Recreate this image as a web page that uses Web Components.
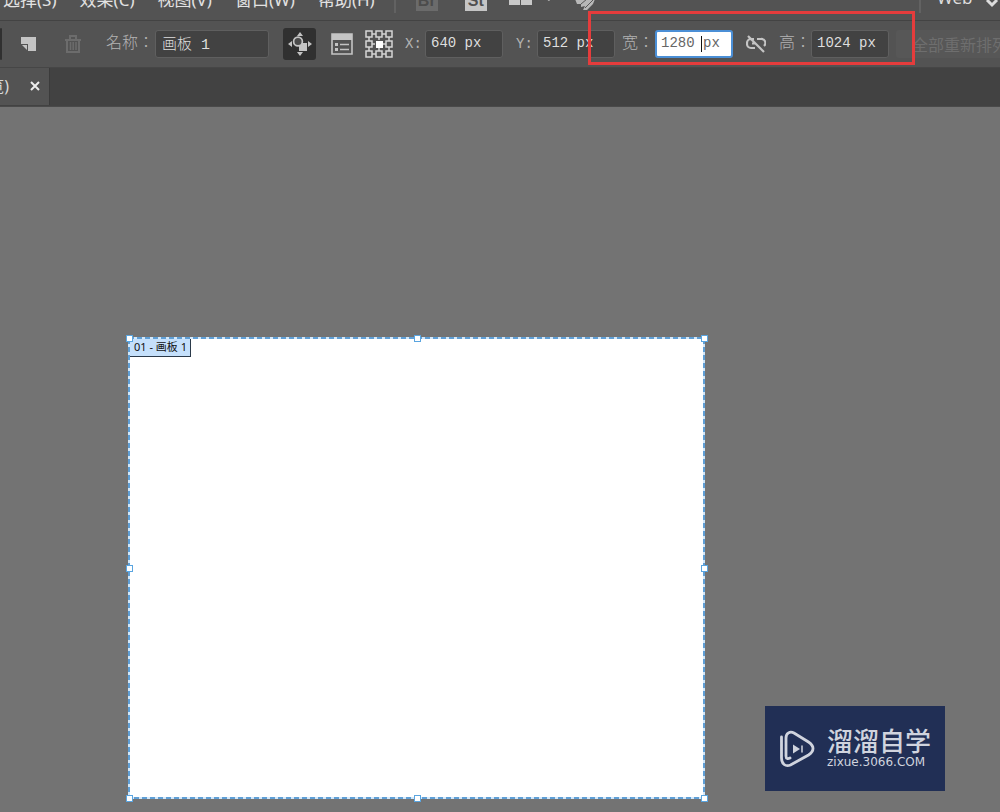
<!DOCTYPE html>
<html lang="zh-CN">
<head>
<meta charset="utf-8">
<title>画板</title>
<style>
html,body{margin:0;height:100%;overflow:hidden;background:#737373}
body{font-family:"Noto Sans","Noto Sans CJK SC",sans-serif}
</style>
</head>
<body>
<art-app></art-app>
<script>
function define(name, markup){
  const template=document.createElement('template');
  template.innerHTML=markup;
  customElements.define(name,class extends HTMLElement{
    connectedCallback(){
      if(this.shadowRoot) return;
      const root=this.attachShadow({mode:'open'});
      root.append(template.content.cloneNode(true));
      for(const el of root.querySelectorAll('[data-bind]')){
        const [target,source]=el.dataset.bind.split(':');
        const value=this.getAttribute(source)||'';
        if(target==='text') el.textContent=value; else el.setAttribute(target,value);
      }
    }
  });
}

define('menu-item',`
<style>
:host{display:block;flex:none}
button{all:unset;display:block;font-size:17px;line-height:22px;color:#e2e2e2;white-space:nowrap}
</style>
<button type="button"><slot></slot></button>`);

define('icon-button',`
<style>
:host{display:block;flex:none}
button{all:unset;display:flex;align-items:center;justify-content:center;box-sizing:border-box;width:100%;height:32px;border-radius:3px;color:#c4c4c4}
:host([active]) button{background:#303030}
:host([dim]) button{color:#6c6c6c}
</style>
<button type="button" data-bind="aria-label:label"><slot></slot></button>`);

define('option-field',`
<style>
:host{display:flex;align-items:center;flex:none;position:relative}
label{flex:none;font:300 16px/24px "Liberation Mono","Noto Sans CJK TC",monospace;color:#b4b4b4;width:var(--label-width,20px);white-space:nowrap}
:host([axis]) label{font-size:14px}
input{box-sizing:border-box;width:var(--field-width,78px);height:28px;margin:0;padding:0 5px 2px;border:1px solid #5f5f5f;border-radius:3px;background:#424242;color:#dedede;outline:0;font:300 14px/24px "Liberation Mono","Noto Sans CJK SC",monospace}
:host([wide]) input{font-size:15px;padding-left:6px}
:host([editing]) input{background:#fff;color:#666;border:2px solid #4b8fd6;padding:0 4px 2px}
.caret{display:none;position:absolute;right:31px;top:6px;width:1px;height:16px;background:#111}
:host([editing]) .caret{display:block}
</style>
<label for="field" lang="zh-TW" data-bind="text:label"></label>
<input id="field" type="text" data-bind="value:value"><span class="caret"></span>`);

define('app-menu',`
<style>
:host{display:flex;align-items:flex-end;box-sizing:border-box;height:21px;background:#535353;border-bottom:1px solid #434343;overflow:hidden}
nav{display:flex;gap:23px;flex:none;margin-left:3px;padding-bottom:9px}
.rule{flex:none;width:2px;height:13px;background:#626262;margin:0 0 7px 19px}
.apps{display:flex;align-items:flex-end;flex:none;padding-left:20px;height:21px}
.badge{all:unset;box-sizing:border-box;width:22px;height:22px;margin-bottom:9px;background:#c5c5c5;color:#505050;font:bold 16px/24px "Liberation Sans",sans-serif;text-align:center}
.badge.off{background:#6b6b6b;color:#4c4c4c;margin-right:27px}
svg{display:block;flex:none}
.space{flex:1}
.workspace{display:flex;align-items:flex-end;flex:none;padding:0 1px 11px 0}
select{appearance:none;border:0;margin:0 0 0 16px;padding:0;background:transparent;color:#dedede;font:17px/22px "Noto Sans",sans-serif;width:48px}
</style>
<nav aria-label="菜单">
<menu-item>选择(S)</menu-item><menu-item>效果(C)</menu-item><menu-item>视图(V)</menu-item><menu-item>窗口(W)</menu-item><menu-item>帮助(H)</menu-item>
</nav>
<span class="rule"></span>
<div class="apps">
<button class="badge off" type="button">Br</button><button class="badge" type="button">St</button>
<svg width="112" height="21" viewBox="0 0 112 21"><path fill="#c8c8c8" d="M22 0h11v6H22zM34 0h11v6H34zM59 0h5l-2 2z"/><path fill="#b8b8b8" d="M88 0h20l-2 5-6 6-4 0 2-4-4 1 0-3-4 0z"/><path d="M94 5l6-5M98 9l8-8" stroke="#585858" stroke-width="1"/></svg>
</div>
<span class="space"></span>
<span class="rule"></span>
<div class="workspace"><select aria-label="工作区"><option>Web</option></select>
<svg width="14" height="14" viewBox="0 0 14 14"><path d="M2 5l5 5 5-5" fill="none" stroke="#ddd" stroke-width="3"/></svg></div>`);

define('options-bar',`
<style>
:host{display:flex;align-items:center;box-sizing:border-box;height:47px;background:#535353;border-bottom:1px solid #464646;overflow:hidden}
.edge{width:2px;margin-right:11px}
.page{width:32px;margin-right:12px}.trash{width:32px;margin-right:17px}
.name{--label-width:49px;--field-width:114px;margin-right:14px}
.move{width:33px;margin-right:10px}.panel{width:32px;margin-right:5px}.origin{width:32px;margin-right:10px}
.x{margin-right:13px}.y{--label-width:21px;margin-right:7px}
.w{--label-width:33px;margin-right:7px}.link{width:32px;margin-right:7px}
.h{--label-width:32px;margin-right:7px}
svg{display:block}
.arrange{all:unset;flex:none;box-sizing:border-box;height:28px;padding-left:16px;width:128px;border-radius:3px;background:#575757;color:#6e6e6e;font:16px/28px "Noto Sans CJK SC",sans-serif;white-space:nowrap}
</style>
<icon-button class="edge" active label="纵向"></icon-button>
<icon-button class="page" label="新建画板"><svg width="16" height="16"><path fill="currentColor" d="M0 1h15v14H7V8H0z"/><path fill="currentColor" d="M1 9h5v5z"/></svg></icon-button>
<icon-button class="trash" dim label="删除画板"><svg width="18" height="19" fill="none" stroke="currentColor"><path stroke-width="2" d="M1 5h16M3 5v12h12V5M6 4V1h6v3"/><path stroke-width="1.5" d="M6.5 7v8M9.2 7v8M12 7v8"/></svg></icon-button>
<option-field class="name" wide label="名称：" value="画板 1"></option-field>
<icon-button class="move" active label="移动/复制带画板的图稿"><svg width="24" height="24"><path fill="currentColor" d="M12 0l3 4H9zM12 24l3-4H9zM0 12l4-3v6zM24 12l-4-3v6z"/><path fill="currentColor" d="M11 11h8v8h-8z"/><circle cx="10" cy="9.500" r="4.4" fill="#4a4a4a" stroke="currentColor" stroke-width="1.7"/></svg></icon-button>
<icon-button class="panel" label="画板选项"><svg width="22" height="22"><path fill="none" stroke="currentColor" stroke-width="1.6" d="M1 1h20v20H1z"/><path fill="currentColor" d="M1 1h20v6H1zM4 10h3v3H4zM4 15h3v3H4z"/><path stroke="currentColor" stroke-width="1.5" d="M9 11.5h9M9 16.5h9"/></svg></icon-button>
<icon-button class="origin" label="参考点"><svg width="28" height="28" fill="none" stroke="#d5d5d5" stroke-width="1.5"><path d="M7 4h4m6 0h4M7 14h3m8 0h3M7 24h4m6 0h4M4 7v4m0 6v4M14 7v3m0 8v3M24 7v4m0 6v4"/><path d="M1 1h6v6H1zM11 1h6v6h-6zM21 1h6v6h-6zM1 11h6v6H1zM21 11h6v6h-6zM1 21h6v6H1zM11 21h6v6h-6zM21 21h6v6h-6z"/><path fill="#fff" stroke="none" d="M11 11h7v7h-7z"/></svg></icon-button>
<option-field class="x" axis label="X:" value="640 px"></option-field>
<option-field class="y" axis label="Y:" value="512 px"></option-field>
<option-field class="w" editing label="宽：" value="1280 px"></option-field>
<icon-button class="link" label="约束宽度和高度比例"><svg width="20" height="18" fill="none" stroke="currentColor" stroke-width="2.2"><path d="M8 4H5a4 4 0 0 0-4 4v1a4 4 0 0 0 4 4h4M11 4h4a4 4 0 0 1 3 7M6 8.5h3M2 1l16 16"/></svg></icon-button>
<option-field class="h" label="高：" value="1024 px"></option-field>
<button class="arrange" type="button" disabled>全部重新排列</button>`);

define('document-tabs',`
<style>
:host{display:flex;box-sizing:border-box;height:39px;background:#424242;border-bottom:1px solid #4a4a4a;overflow:hidden}
.tab{display:flex;align-items:center;justify-content:flex-end;box-sizing:border-box;width:50px;height:37px;padding:0 9px 2px 0;gap:21px;background:#535353;border-right:1px solid #3b3b3b;color:#d8d8d8;font-size:16px;line-height:20px;white-space:nowrap}
button{all:unset;display:block;flex:none}
svg{display:block}
</style>
<div class="tab"><span>览)</span><button type="button" aria-label="关闭"><svg width="10" height="10"><path d="M1 1l8 8M9 1L1 9" stroke="#eee" stroke-width="2"/></svg></button></div>`);

define('art-board',`
<style>
:host{display:block;box-sizing:border-box;background:#fff}
.tag{display:block;box-sizing:border-box;width:fit-content;height:19px;padding:0 3px 0 4px;border:1px solid #2b3a4a;background:#c5e0fb;color:#111;font:11px/16px "Noto Sans","Noto Sans CJK SC",sans-serif;white-space:nowrap}
.frame{position:absolute;inset:0;width:100%;height:100%;overflow:visible}
rect{fill:none}
.handle{position:absolute;box-sizing:border-box;width:7px;height:7px;margin:-3px;background:#fff;border:1px solid #5aa5e0}
</style>
<span class="tag"><slot></slot></span>
<svg class="frame"><rect width="100%" height="100%" stroke="#d3e8fa" stroke-width="2"/><rect width="100%" height="100%" stroke="#5f9fd6" stroke-width="2" stroke-dasharray="5 3"/></svg>
<i class="handle" style="left:0;top:0"></i><i class="handle" style="left:50%;top:0"></i><i class="handle" style="left:100%;top:0"></i>
<i class="handle" style="left:0;top:50%"></i><i class="handle" style="left:100%;top:50%"></i>
<i class="handle" style="left:0;top:100%"></i><i class="handle" style="left:50%;top:100%"></i><i class="handle" style="left:100%;top:100%"></i>`);

define('site-mark',`
<style>
:host{display:flex;align-items:center;box-sizing:border-box;width:180px;height:85px;padding:0 12px 0 14px;gap:12px;background:#212f55;color:#d0d4de}
svg{flex:none;display:block}
strong{display:block;font:500 26px/30px "Noto Sans CJK SC",sans-serif;white-space:nowrap}
small{display:block;font:12px/14px "DejaVu Sans",sans-serif;white-space:nowrap}
div{padding-bottom:4px}
</style>
<svg width="36" height="38" viewBox="0 0 36 38" fill="none" stroke="currentColor" stroke-width="2.8" stroke-linecap="round"><path d="M2.500 7v21c0 6 4 9 9 7l18-10c6-4 6-9 0-13L15 3c-4-2-8 0-8 5v18c0 3 2 3 4 2"/><path d="M23 16v6" stroke-width="1.5"/><path d="M14 14.500l7 4.500-7 4.500z" fill="currentColor" stroke="none"/></svg>
<div><strong>溜溜自学</strong><small>zixue.3066.COM</small></div>`);

define('art-app',`
<style>
:host{display:flex;flex-direction:column;height:100%;position:relative;background:#737373;overflow:hidden}
app-menu,options-bar,document-tabs{flex:none}
main{position:relative;flex:1;min-height:0;background:#737373}
art-board{position:absolute;left:129px;top:231px;width:575px;height:460px}
site-mark{position:absolute;right:55px;bottom:21px}
.callout{position:absolute;box-sizing:border-box;left:588px;top:11px;width:327px;height:54px;border:3px solid #e53c3c;pointer-events:none}
</style>
<app-menu></app-menu>
<options-bar></options-bar>
<document-tabs></document-tabs>
<main><art-board>01 - 画板 1</art-board><site-mark></site-mark></main>
<div class="callout"></div>`);
</script>
</body>
</html>
